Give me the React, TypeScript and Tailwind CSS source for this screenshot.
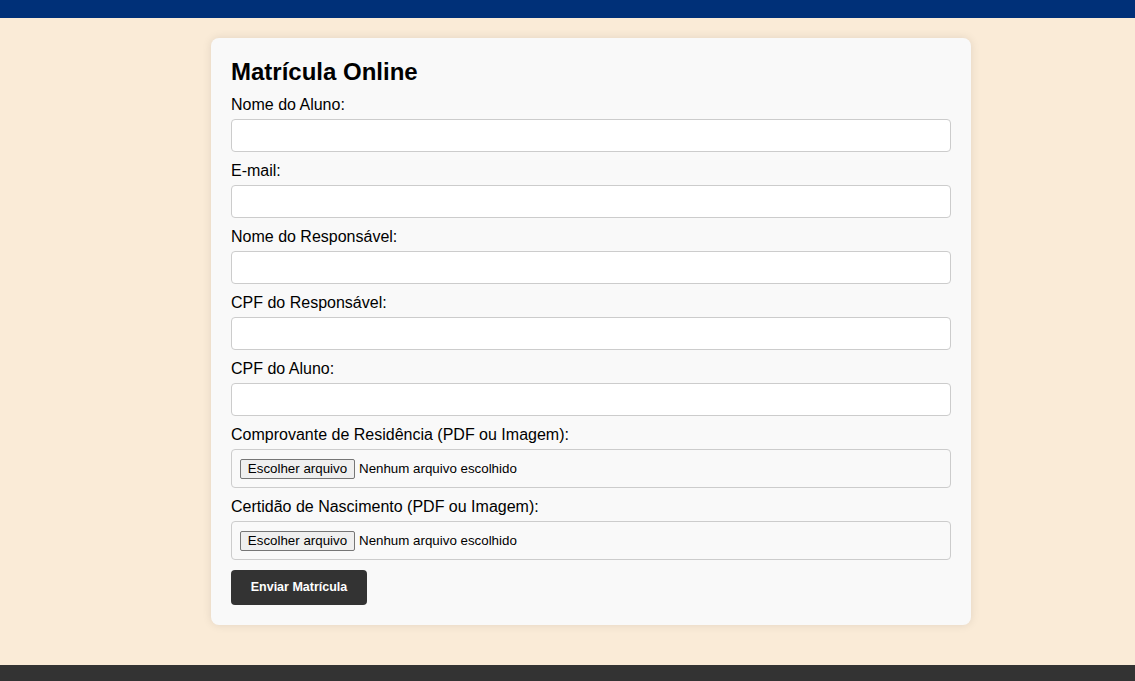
import React from "react";

const textFields = [
	"Nome do Aluno:",
	"E-mail:",
	"Nome do Responsável:",
	"CPF do Responsável:",
	"CPF do Aluno:",
];

const fileFields = [
	"Comprovante de Residência (PDF ou Imagem):",
	"Certidão de Nascimento (PDF ou Imagem):",
];

function FileField({ label }: { label: string }) {
	return (
		<>
			<label className="block text-[16px] leading-[18px] text-black">
				{label}
			</label>
			<div className="mt-[5px] mb-[10px] flex h-[39px] items-center rounded border border-[#ccc] bg-[#f9f9f9] px-2">
				<span className="flex h-[20px] w-[115px] items-center justify-center rounded-[2px] border border-[#767676] bg-[#efefef] text-[13.33px] text-black">
					Escolher arquivo
				</span>
				<span className="ml-[4px] text-[13.33px] text-black">
					Nenhum arquivo escolhido
				</span>
			</div>
		</>
	);
}

export default function App() {
	return (
		<div
			className="min-h-screen bg-[#faebd7]"
			style={{ fontFamily: '"Liberation Sans", Arial, sans-serif' }}
		>
			<header className="h-[18px] bg-[#003078]"></header>
			<main className="pt-5 pb-10 pl-[47px]">
				<div className="mx-auto w-[760px] rounded-lg bg-[#f9f9f9] p-5 shadow-[0_0_10px_rgba(0,0,0,0.1)]">
					<h2 className="mb-[10px] text-[24px] font-bold leading-[28px] text-black">
						Matrícula Online
					</h2>
					<form onSubmit={(e) => e.preventDefault()}>
						{textFields.map((label) => (
							<div key={label}>
								<label className="block text-[16px] leading-[18px] text-black">
									{label}
								</label>
								<input
									type="text"
									className="mt-[5px] mb-[10px] block h-[33px] w-full rounded border border-[#ccc] bg-white px-2 text-[13.33px] outline-none"
								/>
							</div>
						))}
						{fileFields.map((label) => (
							<FileField key={label} label={label} />
						))}
						<button
							type="submit"
							className="h-[35px] w-[136px] rounded bg-[#333] text-[12.5px] font-bold text-white"
						>
							Enviar Matrícula
						</button>
					</form>
				</div>
			</main>
			<footer className="h-[40px] bg-[#333]"></footer>
		</div>
	);
}
